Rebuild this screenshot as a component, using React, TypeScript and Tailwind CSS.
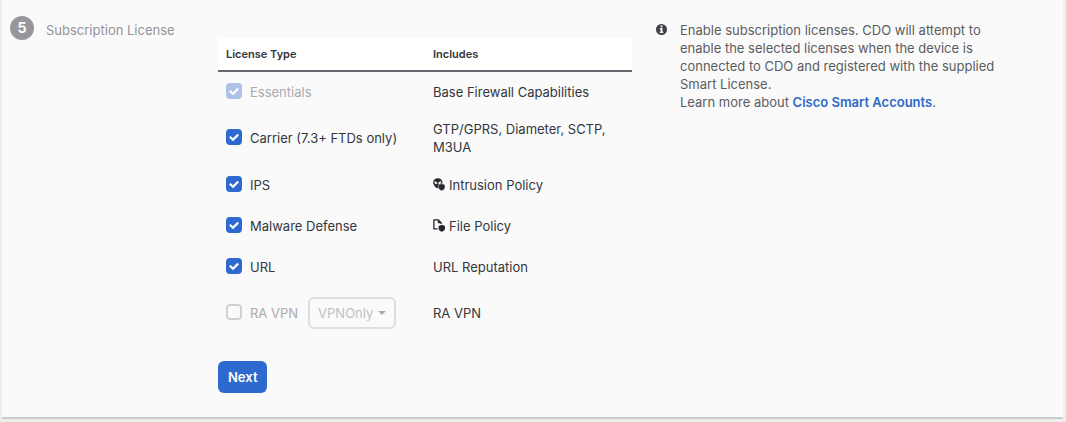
import { useState, type ReactNode } from 'react';
import clsx from 'clsx';

interface CheckboxProps {
  id: string;
  label: string;
  checked: boolean;
  disabled?: boolean;
  onChange?: (checked: boolean) => void;
}

interface License {
  id: string;
  label: string;
  includes: ReactNode;
  locked?: boolean;
}

function IntrusionIcon() {
  return (
    <svg className="h-[13px] w-3 shrink-0" viewBox="0 0 12 13" aria-hidden="true">
      <path fill="#23282e" d="M4.8 0.2C7.6 0.2 9.4 1.9 9.4 4.2C9.4 7 6.8 10.2 4.8 10.2C2.8 10.2 0.2 7 0.2 4.2C0.2 1.9 2 0.2 4.8 0.2Z" />
      <path fill="#fafafa" d="M1.4 3L4.3 4.6C4.3 6 3.4 6.5 2.8 6.2C2 5.8 1.4 4.6 1.4 3ZM8.2 3L5.3 4.6C5.3 6 6.2 6.5 6.8 6.2C7.6 5.8 8.2 4.6 8.2 3Z" />
      <path fill="#23282e" stroke="#fafafa" strokeWidth="0.5" d="M8.7 5.6L12 6.8V9.2C12 11 10.6 12.2 8.7 12.8C6.8 12.2 5.4 11 5.4 9.2V6.8Z" />
    </svg>
  );
}

function FileIcon() {
  return (
    <svg className="h-[13px] w-3 shrink-0" viewBox="0 0 12 13" aria-hidden="true">
      <path fill="none" stroke="#23282e" strokeWidth="1.3" d="M4.6 9.9H0.9V0.9H5.2L8.1 3.8V5" />
      <path fill="#23282e" d="M4.8 0.5L8.6 4.2H4.8Z" />
      <path fill="#23282e" d="M8.8 5.8L12 7V9.3C12 11 10.6 12.2 8.8 12.8C7 12.2 5.6 11 5.6 9.3V7Z" />
    </svg>
  );
}

function InfoIcon() {
  return (
    <svg className="mt-[3px] h-[11px] w-[11px] shrink-0" viewBox="0 0 11 11" aria-hidden="true">
      <circle cx="5.5" cy="5.5" r="5.5" fill="#3e4248" />
      <path fill="#fafafa" d="M4.6 1.5H6.5V3.2H4.6ZM3.8 4.1H6.5V7.7H7.3V9H3.8V7.7H4.6V5.4H3.8Z" />
    </svg>
  );
}

function Checkbox({ id, label, checked, disabled, onChange }: CheckboxProps) {
  return (
    <label htmlFor={id} className={clsx('flex items-center gap-2', disabled && 'text-[#a9abae]')}>
      <span className="grid h-4 w-4 shrink-0 -translate-y-px">
        <input
          id={id}
          type="checkbox"
          checked={checked}
          disabled={disabled}
          onChange={(e) => onChange?.(e.target.checked)}
          className="col-start-1 row-start-1 h-4 w-4 appearance-none rounded border-2 border-[#ced1d6] checked:border-[#2d69cf] checked:bg-[#2d69cf] checked:disabled:border-[#aec2e8] checked:disabled:bg-[#aec2e8]"
        />
        {checked && (
          <svg className="pointer-events-none z-10 col-start-1 row-start-1 h-4 w-4" viewBox="0 0 16 16" aria-hidden="true">
            <path fill="none" stroke="#fff" strokeWidth="2.2" d="M3.8 7.8L7 10.8L12.2 5.6" />
          </svg>
        )}
      </span>
      {label}
    </label>
  );
}

const licenses: License[] = [
  { id: 'essentials', label: 'Essentials', includes: 'Base Firewall Capabilities', locked: true },
  { id: 'carrier', label: 'Carrier (7.3+ FTDs only)', includes: 'GTP/GPRS, Diameter, SCTP, M3UA' },
  { id: 'ips', label: 'IPS', includes: <><IntrusionIcon />Intrusion Policy</> },
  { id: 'malware', label: 'Malware Defense', includes: <><FileIcon />File Policy</> },
  { id: 'url', label: 'URL', includes: 'URL Reputation' },
];

export default function App() {
  const [selected, setSelected] = useState<Record<string, boolean>>({
    essentials: true,
    carrier: true,
    ips: true,
    malware: true,
    url: true,
  });

  return (
    <div className="bg-[#eeeeee] pr-[3px] pb-[3px] pl-[2px] font-['Inter',sans-serif] text-[13px] leading-[18px] text-[#33373c]">
      <section className="grid grid-cols-[208px_minmax(0,414fr)_minmax(0,383fr)] border-b-2 border-[#cccccc] bg-[#fafafa] pr-12 pb-6 pl-2">
        {/* Step title */}
        <div className="flex items-start gap-3 pt-4">
          <span className="flex h-6 w-6 shrink-0 items-center justify-center rounded-full bg-[#97979b] text-sm font-bold text-white">
            5
          </span>
          <h2 className="pt-[5px] text-[#929497]">Subscription License</h2>
        </div>

        {/* License selection */}
        <div className="pt-[38px]">
          <table className="w-full table-fixed text-left">
            <thead>
              <tr className="h-[33px] border-b-2 border-[#64676d] bg-white text-[11px]">
                <th className="px-2 font-semibold">License Type</th>
                <th className="px-2 font-semibold">Includes</th>
              </tr>
            </thead>
            <tbody>
              {licenses.map((item) => (
                <tr key={item.id} className="h-[41px]">
                  <td className="px-2">
                    <Checkbox
                      id={item.id}
                      label={item.label}
                      checked={!!selected[item.id]}
                      disabled={item.locked}
                      onChange={(checked) => setSelected((s) => ({ ...s, [item.id]: checked }))}
                    />
                  </td>
                  <td className="px-2 py-2">
                    <div className="flex items-center gap-1">{item.includes}</div>
                  </td>
                </tr>
              ))}
              <tr className="h-[52px]">
                <td className="px-2">
                  <div className="flex items-center gap-[10px]">
                    <Checkbox id="ra-vpn" label="RA VPN" checked={false} disabled />
                    <div className="grid items-center">
                      <select
                        aria-label="RA VPN license"
                        disabled
                        className="col-start-1 row-start-1 h-8 w-[88px] appearance-none rounded-md border-2 border-[#dcdee1] pl-2 text-[#bfc1c4]"
                      >
                        <option>VPNOnly</option>
                      </select>
                      <svg
                        className="pointer-events-none col-start-1 row-start-1 mr-[10px] h-1 w-2 justify-self-end"
                        viewBox="0 0 8 4"
                        aria-hidden="true"
                      >
                        <path d="M0 0H8L4 4Z" fill="#a9abae" />
                      </svg>
                    </div>
                  </div>
                </td>
                <td className="px-2">RA VPN</td>
              </tr>
            </tbody>
          </table>
          <button
            type="button"
            className="mt-[22px] h-8 rounded-md bg-[#2d69cf] px-[10px] font-semibold text-white hover:bg-[#2459b3]"
          >
            Next
          </button>
        </div>

        {/* Help text */}
        <div className="flex items-start gap-[13px] pt-[21px] pl-6 text-[#5a5d61]">
          <InfoIcon />
          <p>
            Enable subscription licenses. CDO will attempt to enable the selected licenses when the device is connected
            to CDO and registered with the supplied Smart License.
            <br />
            Learn more about{' '}
            <a href="#smart-accounts" className="font-semibold text-[#2e69c5] hover:underline">
              Cisco Smart Accounts
            </a>
            .
          </p>
        </div>
      </section>
    </div>
  );
}
